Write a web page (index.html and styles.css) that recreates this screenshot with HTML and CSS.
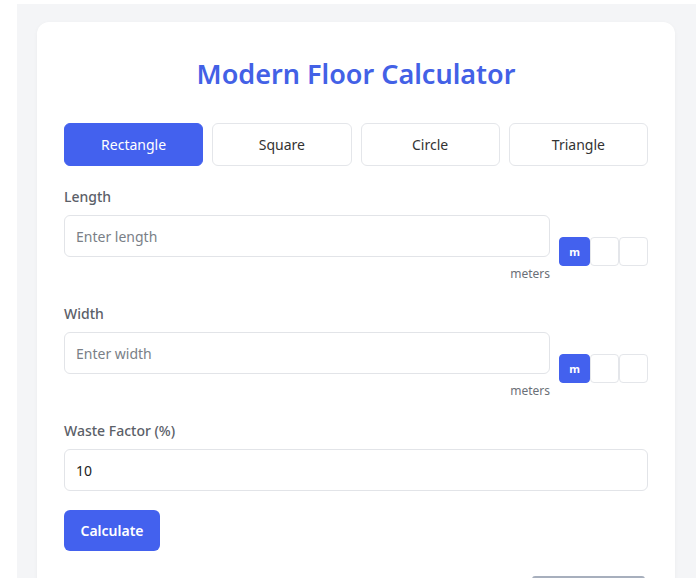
FILE: index.html
```html
<!DOCTYPE html>
<html>
  <head>
    <link rel="stylesheet" href="styles.css">
  </head>
  <body>
    <div class="page">
      <div class="card">
        <h1 class="title">Modern Floor Calculator</h1>

        <div class="shape-tabs">
          <button class="tab active">Rectangle</button>
          <button class="tab">Square</button>
          <button class="tab">Circle</button>
          <button class="tab">Triangle</button>
        </div>

        <div class="field">
          <label class="field-label">Length</label>
          <div class="field-row">
            <div class="field-main">
              <input type="text" class="text-input" placeholder="Enter length" />
              <div class="unit-hint">meters</div>
            </div>
            <div class="unit-group">
              <button class="unit active">m</button>
              <button class="unit"></button>
              <button class="unit"></button>
            </div>
          </div>
        </div>

        <div class="field">
          <label class="field-label">Width</label>
          <div class="field-row">
            <div class="field-main">
              <input type="text" class="text-input" placeholder="Enter width" />
              <div class="unit-hint">meters</div>
            </div>
            <div class="unit-group">
              <button class="unit active">m</button>
              <button class="unit"></button>
              <button class="unit"></button>
            </div>
          </div>
        </div>

        <div class="field">
          <label class="field-label">Waste Factor (%)</label>
          <input type="text" class="text-input" value="10" />
        </div>

        <button class="calc-btn">Calculate</button>

        <div class="result-peek"></div>
      </div>
    </div>
  </body>
</html>
```

FILE: styles.css
```css
html,
body {
  overflow: hidden;
}
body {
  margin: 0;
  background: #fff;
  font-family: "Noto Sans", "Open Sans", Arial, sans-serif;
  font-size: 14px;
  color: #333;
}
.page {
  margin: 4px 0 0 17px;
  padding: 18px 21px 0 20px;
  height: 556px;
  background: #f4f5f7;
}
.card {
  background: #fff;
  border-radius: 12px;
  padding: 32px 27px 20px;
  box-shadow: 0 1px 4px rgba(0, 0, 0, 0.04);
}
.title {
  margin: 0 0 29px;
  text-align: center;
  font-size: 27px;
  line-height: 40px;
  font-weight: 600;
  color: #4361e6;
}
.shape-tabs {
  display: grid;
  grid-template-columns: repeat(4, 1fr);
  gap: 9px;
}
.tab {
  height: 43px;
  border: 1px solid #e4e6ea;
  border-radius: 6px;
  background: #fff;
  font-family: inherit;
  font-size: 14px;
  color: #333;
}
.tab.active {
  background: #4361ee;
  border-color: #4361ee;
  color: #fff;
}
.field {
  display: flex;
  flex-direction: column;
  margin-top: 21px;
}
.field + .field {
  margin-top: 22px;
}
.field-label {
  line-height: 20px;
  font-weight: 500;
  color: #5b6068;
  margin-bottom: 8px;
}
.field-row {
  display: flex;
  align-items: flex-start;
  gap: 9px;
}
.field-main {
  flex: 1;
  display: flex;
  flex-direction: column;
}
.text-input {
  box-sizing: border-box;
  width: 100%;
  height: 42px;
  padding: 0 11px;
  border: 1px solid #e2e4e8;
  border-radius: 6px;
  font-family: inherit;
  font-size: 14px;
  color: #222;
  outline: none;
}
.text-input::placeholder {
  color: #7a7f87;
}
.unit-hint {
  margin-top: 9px;
  text-align: right;
  font-size: 12px;
  line-height: 16px;
  color: #6b7078;
}
.unit-group {
  display: flex;
  margin-top: 22px;
}
.unit {
  box-sizing: border-box;
  width: 29px;
  height: 29px;
  padding: 0;
  border: 1px solid #e4e6ea;
  border-radius: 4px;
  background: #fff;
  font-family: inherit;
  font-size: 11px;
  font-weight: 700;
  color: #fff;
}
.unit.active {
  width: 31px;
  background: #4361ee;
  border-color: #4361ee;
}
.calc-btn {
  display: block;
  margin-top: 19px;
  width: 96px;
  height: 41px;
  border: none;
  border-radius: 6px;
  background: #4361ee;
  font-family: inherit;
  font-size: 14px;
  font-weight: 600;
  color: #fff;
}
.result-peek {
  width: 113px;
  height: 4px;
  margin: 25px 3px 0 auto;
  border-radius: 3px 3px 0 0;
  background: #a7afbd;
}
```
